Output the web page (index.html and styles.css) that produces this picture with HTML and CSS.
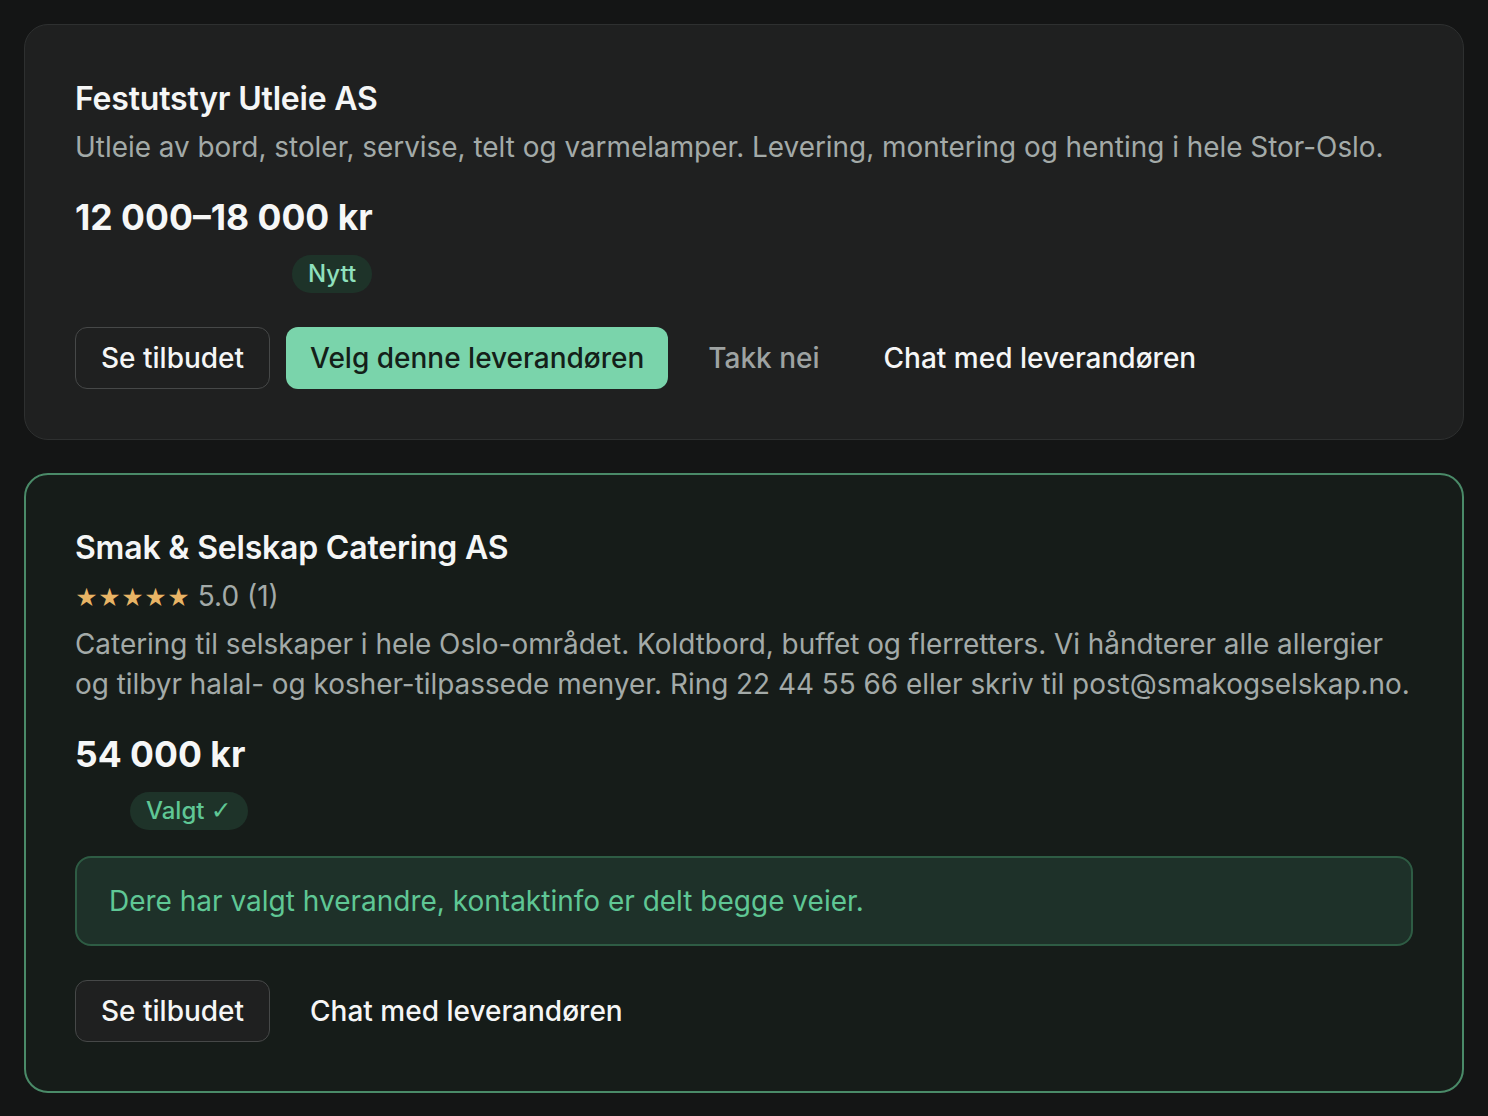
FILE: index.html
```html
<!DOCTYPE html>
<html lang="no">
<head>
<meta charset="utf-8">
<title>Tilbud</title>
<link rel="stylesheet" href="styles.css">
</head>
<body>
<main class="list">
  <section class="card">
    <h2 class="title">Festutstyr Utleie AS</h2>
    <p class="desc">Utleie av bord, stoler, servise, telt og varmelamper. Levering, montering og henting i hele Stor-Oslo.</p>
    <div class="price">12 000–18 000 kr</div>
    <div class="badge-row"><span class="badge badge-new badge-offset-new">Nytt</span></div>
    <div class="actions">
      <button class="btn btn-outline">Se tilbudet</button>
      <button class="btn btn-primary">Velg denne leverandøren</button>
      <button class="btn btn-ghost btn-muted">Takk nei</button>
      <button class="btn btn-ghost">Chat med leverandøren</button>
    </div>
  </section>

  <section class="card card-selected">
    <h2 class="title">Smak &amp; Selskap Catering AS</h2>
    <div class="rating"><span class="stars">★★★★★</span> 5.0 (1)</div>
    <p class="desc desc-multi">Catering til selskaper i hele Oslo-området. Koldtbord, buffet og flerretters. Vi håndterer alle allergier og tilbyr halal- og kosher-tilpassede menyer. Ring 22 44 55 66 eller skriv til post@smakogselskap.no.</p>
    <div class="price">54 000 kr</div>
    <div class="badge-row"><span class="badge badge-chosen badge-offset-chosen">Valgt <span class="check">✓</span></span></div>
    <div class="notice">Dere har valgt hverandre, kontaktinfo er delt begge veier.</div>
    <div class="actions">
      <button class="btn btn-outline">Se tilbudet</button>
      <button class="btn btn-ghost">Chat med leverandøren</button>
    </div>
  </section>
</main>
</body>
</html>
```
FILE: styles.css
```css
* { box-sizing: border-box; }
html, body { margin: 0; padding: 0; }
body {
  background: #141515;
  font-family: Inter, "Noto Sans", sans-serif;
  color: #f3f4f4;
}
.list {
  padding: 24px;
  display: flex;
  flex-direction: column;
  gap: 33px;
}
.card {
  background: #1f2020;
  border: 1px solid #2e3030;
  border-radius: 24px;
  padding: 50px;
  display: flex;
  flex-direction: column;
  align-items: flex-start;
}
.card-selected {
  background: #161c19;
  border: 2px solid #4a8a68;
  padding: 49px;
}
.title {
  margin: 0;
  font-size: 32px;
  line-height: 48px;
  font-weight: 600;
  color: #f5f6f6;
  letter-spacing: -0.2px;
}
.desc {
  margin: 4px 0 0;
  font-size: 27.9px;
  line-height: 40px;
  color: #a3aaa8;
}
.desc-multi { margin-top: 6px; }
.rating {
  margin-top: 4px;
  font-size: 28px;
  line-height: 40px;
  color: #a3aaa8;
}
.stars {
  color: #e8b465;
  font-size: 22px;
  letter-spacing: 0;
}
.price {
  margin-top: 24px;
  font-size: 35.5px;
  line-height: 54px;
  font-weight: 700;
  color: #f6f7f7;
}
.badge-row {
  margin-top: 10px;
  display: flex;
}
.badge {
  display: inline-block;
  height: 38px;
  line-height: 38px;
  padding: 0 16px;
  border-radius: 19px;
  font-size: 24px;
  font-weight: 500;
  background: #1e3329;
}
.check {
  font-family: "DejaVu Sans", sans-serif;
  font-weight: 400;
  font-size: 25px;
}
.badge-new { color: #8fe0bd; }
.badge-chosen { color: #5fc795; }
.badge-offset-new { margin-left: 217px; }
.badge-offset-chosen { margin-left: 55px; }
.notice {
  margin-top: 26px;
  align-self: stretch;
  background: #1e3129;
  border: 2px solid #2e5c44;
  border-radius: 16px;
  padding: 0 32px;
  height: 90px;
  display: flex;
  align-items: center;
  font-size: 28px;
  color: #5fc795;
}
.actions {
  margin-top: 34px;
  display: flex;
  gap: 16px;
  align-items: center;
}
.btn {
  font-family: Inter, "Noto Sans", sans-serif;
  font-size: 28px;
  font-weight: 500;
  height: 62px;
  padding: 0 24px;
  border-radius: 12px;
  border: none;
  background: transparent;
  color: #f5f6f6;
  cursor: pointer;
  white-space: nowrap;
}
.btn-outline {
  border: 1px solid #464848;
  background: #1f2020;
  padding: 0 25px;
}
.btn-primary {
  background: #7ad4ab;
  color: #142019;
}
.btn-ghost { background: transparent; }
.btn-muted { color: #9ea3a2; }
```
